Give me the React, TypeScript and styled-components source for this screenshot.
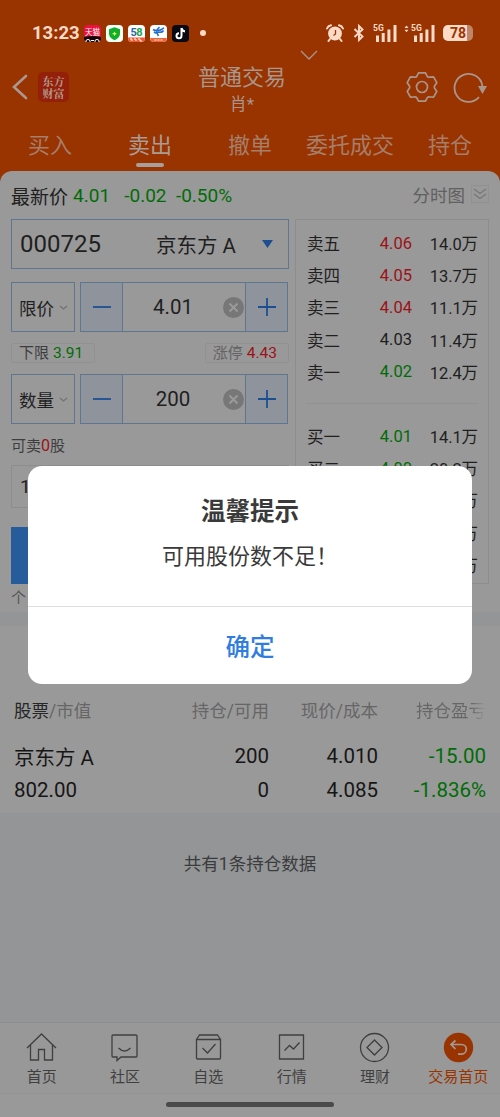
import React from 'react';
import styled, { createGlobalStyle } from 'styled-components';

const Global = createGlobalStyle`
  * { box-sizing: border-box; }
  body { margin: 0; background: #999; }
  body, button { font-family: Roboto, "Noto Sans CJK SC", sans-serif; }
  svg { display: block; flex: none; }
`;

const ink = '#1f1f1f';
const green = '#006c06';
const red = '#9c1218';
const blue = '#1c4f92';
const line = '#5f7690';
const faint = '#8c8d8e';

const Screen = styled.div`
  position: relative;
  width: 500px;
  height: 1117px;
  overflow: hidden;
  background: #939597;
  color: ${ink};
  display: flex;
  flex-direction: column;
`;

const Header = styled.header`
  flex: none;
  height: 183px;
  background: #993300;
  color: #a8968d;
`;

const StatusBar = styled.div`
  height: 66px;
  display: flex;
  align-items: center;
  padding: 0 27px 0 32px;
  color: #fbdac8;
`;

const Clock = styled.span`
  font: 700 18.5px/24px Roboto, sans-serif;
  width: 52px;
`;

const AppBadges = styled.div`
  display: flex;
  gap: 5px;
`;

const Dot = styled.i`
  width: 6px;
  height: 6px;
  border-radius: 50%;
  background: #fbdac8;
  margin-left: 11px;
`;

const Signals = styled.div`
  display: flex;
  align-items: center;
  margin-left: auto;
`;

const Battery = styled.span`
  width: 30px;
  height: 16px;
  margin-left: 8px;
  border-radius: 5px;
  background: linear-gradient(90deg, #fbdac8 24px, #c08468 24px);
  color: #993300;
  font: 700 14px/17px Roboto, sans-serif;
  text-align: center;
`;

const NavBar = styled.div`
  height: 56px;
  display: grid;
  grid-template-columns: 38px 32px 1fr 46px 54px;
  align-items: center;
  padding-top: 0;
`;

const Brand = styled.div`
  width: 31px;
  height: 30px;
  margin-top: -14px;
  border-radius: 5px;
  background: #942009;
  color: #b39a8e;
  font: 700 11px/12px "Noto Serif CJK SC", "Noto Sans CJK SC", sans-serif;
  text-align: center;
  padding-top: 3px;
`;

const NavIcon = styled.div<{ $left: number }>`
  margin-top: -14px;
  padding-left: ${p => p.$left}px;
`;

const Account = styled.div`
  display: flex;
  justify-content: center;
  gap: 14px;
  padding-left: 46px;
  margin-top: -8px;
`;

const AccountName = styled.div`
  font-size: 22px;
  line-height: 28px;
  text-align: center;
  small { display: block; font-size: 17px; line-height: 24px; }
`;

const Tabs = styled.nav`
  display: grid;
  grid-template-columns: repeat(5, 1fr);
`;

const Tab = styled.a<{ $on?: boolean }>`
  height: 48px;
  padding-top: 8px;
  font-size: 22px;
  line-height: 32px;
  text-align: center;
  white-space: nowrap;
  color: ${p => (p.$on ? '#aa9c95' : '#a67e6a')};
  &::after {
    content: '';
    display: ${p => (p.$on ? 'block' : 'none')};
    width: 28px;
    height: 4px;
    border-radius: 2px;
    background: #a5a09e;
    margin: 1px auto 0;
  }
`;

const TradePanel = styled.section`
  flex: none;
  height: 441px;
  margin-top: -12px;
  border-radius: 12px 12px 0 0;
  background: #999;
  padding: 0 11px;
`;

const QuoteLine = styled.div`
  height: 48px;
  display: flex;
  align-items: center;
  font-size: 19px;
  white-space: pre;
  color: ${green};
  b { font-weight: 400; color: ${ink}; margin-right: 5px; }
`;

const ChartToggle = styled.span`
  display: flex;
  align-items: center;
  gap: 6px;
  margin-left: auto;
  font-size: 17.5px;
  color: #606060;
  margin-top: -2px;
`;

const ToggleBox = styled.span`
  width: 18px;
  height: 18px;
  border: 1px solid #919191;
  display: grid;
  place-items: center;
`;

const Columns = styled.div`
  display: grid;
  grid-template-columns: 278px 194px;
  gap: 6px;
`;

const StockField = styled.div`
  height: 50px;
  border: 1px solid ${line};
  display: flex;
  align-items: center;
  padding: 0 15px 0 8px;
  font-size: 24px;
  span { margin-left: auto; font-size: 20.5px; margin-right: 26px; }
`;

const FieldRow = styled.div<{ $top: number }>`
  display: grid;
  grid-template-columns: 64px 208px;
  gap: 5px;
  height: 50px;
  margin-top: ${p => p.$top}px;
`;

const Picker = styled.div`
  border: 1px solid ${line};
  display: flex;
  align-items: center;
  gap: 5px;
  padding-left: 7px;
  font-size: 17.5px;
`;

const Stepper = styled.div`
  border: 1px solid ${line};
  display: grid;
  grid-template-columns: 42px 1fr 42px;
`;

const StepButton = styled.div`
  display: grid;
  place-items: center;
  background: #8f949c;
  &:first-child { border-right: 1px solid ${line}; }
  &:last-child { border-left: 1px solid ${line}; }
`;

const StepValue = styled.div`
  display: grid;
  grid-template-columns: 100px 21px;
  align-items: center;
  text-align: center;
  font-size: 20.5px;
`;

const Limits = styled.div`
  display: flex;
  justify-content: space-between;
  margin-top: 11px;
`;

const Limit = styled.div<{ $tone: string; $muted?: boolean }>`
  height: 20px;
  border: 1px solid #909192;
  border-radius: 2px;
  padding: 0 ${p => (p.$muted ? 11 : 11)}px 0 7px;
  font-size: 15px;
  line-height: 19px;
  color: ${p => (p.$muted ? '#636363' : '#3c3c3c')};
  b { font-weight: 400; font-size: 15.5px; color: ${p => p.$tone}; margin-left: 4px; }
`;

const Sellable = styled.div`
  margin-top: 10px;
  height: 24px;
  font-size: 15px;
  line-height: 24px;
  color: #3e3e3e;
  b { font-weight: 400; font-size: 16px; color: ${red}; }
`;

const Presets = styled.div`
  height: 43px;
  margin-top: 7px;
  border: 1px solid ${faint};
  padding-left: 8px;
  font-size: 19px;
  line-height: 42px;
`;

const SellButton = styled.div`
  height: 57px;
  margin-top: 19px;
  background: #265c9c;
`;

const Note = styled.div`
  font-size: 15px;
  line-height: 28px;
  color: #555;
`;

const Book = styled.div`
  height: 365px;
  border: 1px solid ${faint};
  padding: 7px 10px;
`;

const BookRow = styled.div`
  height: 32.2px;
  display: grid;
  grid-template-columns: 50px 55px 1fr;
  align-items: center;
  font-size: 16.5px;
  white-space: nowrap;
  padding-left: 1px;
`;

const Price = styled.span<{ $tone: string }>`
  color: ${p => p.$tone};
  text-align: right;
`;

const Volume = styled.span`
  text-align: right;
  letter-spacing: -0.1px;
`;

const BookSplit = styled.div`
  height: 32px;
  display: grid;
  align-items: center;
  &::before { content: ''; height: 1px; background: #909192; }
`;

const Holdings = styled.section`
  flex: none;
  height: 187px;
  margin-top: 14px;
  padding-top: 64px;
  background: #999;
`;

const HoldRow = styled.div<{ $head?: boolean }>`
  height: 34px;
  margin-bottom: ${p => (p.$head ? 14 : 0)}px;
  margin-top: ${p => (p.$head ? 3 : 0)}px;
  height: ${p => (p.$head ? 32 : 34)}px;
  display: grid;
  grid-template-columns: 150px 105px 109px 108px;
  padding-left: 14px;
  align-items: center;
  font-size: ${p => (p.$head ? 17.5 : 20.5)}px;
  color: ${p => (p.$head ? '#666' : '#161616')};
  text-align: right;
  white-space: nowrap;
  > :first-child { text-align: left; }
  b { font-weight: 400; color: #262626; }
  em { font-style: normal; color: ${green}; }
`;

const FadeText = styled.span`
  background: linear-gradient(90deg, #666 78%, #999 100%);
  background-clip: text;
  -webkit-background-clip: text;
  color: transparent;
`;

const Summary = styled.p`
  margin: 37px 0 0;
  font-size: 17.5px;
  line-height: 28px;
  text-align: center;
  color: #3b3c3d;
`;

const BottomBar = styled.nav`
  flex: none;
  margin-top: auto;
  height: 72px;
  border-top: 1px solid #8e8e8e;
  border-bottom: 1px solid #939393;
  background: #989898;
  display: grid;
  grid-template-columns: repeat(6, 1fr);
`;

const BottomItem = styled.a<{ $on?: boolean }>`
  display: flex;
  flex-direction: column;
  align-items: center;
  padding-top: 9px;
  font-size: 15px;
  line-height: 24px;
  white-space: nowrap;
  color: ${p => (p.$on ? '#993300' : '#3f3f3f')};
  svg { margin-bottom: 2px; }
`;

const GestureArea = styled.div`
  flex: none;
  height: 23px;
  background: #999;
  padding-top: 8px;
  &::before {
    content: '';
    display: block;
    width: 168px;
    height: 5px;
    margin: 0 auto;
    border-radius: 3px;
    background: #4a4a4a;
  }
`;

const Dialog = styled.div`
  position: absolute;
  left: 28px;
  top: 466px;
  width: 444px;
  height: 218px;
  border-radius: 14px;
  background: #fff;
  text-align: center;
  color: #3a3a3a;
  display: flex;
  flex-direction: column;
`;

const DialogTitle = styled.h2`
  margin: 28px 0 0;
  font-size: 24.5px;
  line-height: 36px;
  font-weight: 700;
`;

const DialogText = styled.p`
  margin: 10px 0 0;
  font-size: 22px;
  line-height: 34px;
`;

const Confirm = styled.button`
  margin-top: auto;
  height: 78px;
  padding: 0 0 0;
  border: 0;
  border-top: 1px solid #dde0e0;
  background: none;
  color: #2f7de0;
  font-size: 24.5px;
  font-weight: 500;
`;

const stroke = { fill: 'none', stroke: 'currentColor', strokeWidth: 1.3 } as const;

const TmallBadge = () => (
  <svg width="17" height="17" viewBox="0 0 17 17">
    <rect width="17" height="17" rx="4" fill="#e9123f" />
    <path d="M0 12q8.500-2 17 0v1a4 4 0 0 1-4 4H4a4 4 0 0 1-4-4z" fill="#130609" />
    <text x="8.500" y="9.500" fontSize="7.500" fill="#fff" textAnchor="middle" fontFamily="Noto Sans CJK SC">天猫</text>
    <path d="M2 17v-1a2 1.500 0 0 1 4 0v1M11 17v-1a2 1.500 0 0 1 4 0v1M7 15.500h3" fill="none" stroke="#fff" strokeWidth="1" />
  </svg>
);
const ShieldBadge = () => (
  <svg width="17" height="17" viewBox="0 0 17 17">
    <rect width="17" height="17" rx="4" fill="#f6fff7" />
    <path d="M8.500 2.300 14 4.200v4.600c0 3-2.200 5-5.500 6.400C5.200 13.800 3 11.800 3 8.800V4.200z" fill="#10ae2c" />
    <path d="m8.500 6.500.8 1.600 1.700.7-1.700.7-.8 1.600-.8-1.600L6 8.800l1.700-.7z" fill="#d9ff61" />
  </svg>
);
const CityBadge = () => (
  <svg width="17" height="17" viewBox="0 0 17 17">
    <rect width="17" height="17" rx="4" fill="#fff" />
    <path d="M0 12.500h17v.5a4 4 0 0 1-4 4H4a4 4 0 0 1-4-4z" fill="#f1592f" />
    <text x="2.500" y="10.800" fontSize="11" fontWeight="700" fill="#2865b4" fontFamily="Roboto">5</text>
    <text x="8.300" y="10.800" fontSize="11" fontWeight="700" fill="#21a44b" fontFamily="Roboto">8</text>
    <path d="M2 14h2v2M6 14h2v2M10 14h2v2h2" stroke="#fff" fill="none" />
  </svg>
);
const TelecomBadge = () => (
  <svg width="17" height="17" viewBox="0 0 17 17">
    <rect width="17" height="17" rx="4" fill="#fff" />
    <path d="M.2 13h16.600a4 4 0 0 1-3.800 4H4a4 4 0 0 1-3.800-4z" fill="#ef6336" />
    <path d="M3 4.500c3 2 7 1.500 11-1.700M9.500 2C6 5 6 7 8.500 11M13.500 5.500C12 8 10 7.500 8 7M4 7c2 1.500 3 1 4 0" fill="none" stroke="#236ed0" strokeWidth="1.600" />
    <path d="M4.500 15h8" stroke="#fff" strokeDasharray="2 1" />
  </svg>
);
const TikTokBadge = () => (
  <svg width="17" height="17" viewBox="0 0 17 17">
    <rect width="17" height="17" rx="4" fill="#090911" />
    <path d="M9.500 3v7.700a2.500 2.500 0 1 1-2.500-2.500M9.500 3c.3 2 1.500 3.200 3.500 3.400" fill="none" stroke="#fff" strokeWidth="2" />
  </svg>
);

const AlarmIcon = () => (
  <svg width="18" height="18" viewBox="0 0 18 18">
    <circle cx="9" cy="9.500" r="6.900" fill="#fbdac8" />
    <path d="m4 15-1.500 2M14 15l1.500 2M1 4.500Q2 2 5 1.300M17 4.500Q16 2 13 1.300" stroke="#fbdac8" strokeWidth="2" fill="none" strokeLinecap="round" />
    <path d="M9.500 6v4L7.500 11.500" stroke="#993300" strokeWidth="1.300" fill="none" />
  </svg>
);
const BluetoothIcon = () => (
  <svg width="12" height="18" viewBox="0 0 12 18">
    <path d="m1.500 5 8 7.500L6 16V2l3.500 3.500-8 7.500" fill="none" stroke="#fbdac8" strokeWidth="1.900" />
  </svg>
);
const SignalIcon = ({ arrows }: { arrows?: boolean }) => (
  <svg width={arrows ? 31 : 24} height="18" viewBox={arrows ? '-7 0 31 18' : '0 0 24 18'}>
    {arrows && <path d="m-6.500 4 2-2.500 2 2.500zM-6.500 5.800l2 2.500 2-2.500z" fill="#fbdac8" />}
    <text x="0" y="7" fontSize="8.500" fontWeight="700" fill="#fbdac8" fontFamily="Roboto">5G</text>
    <path d="M3 11.500h3V18H3zM8.700 9h3v9h-3zM14.400 5.500h3V18h-3zM20.500 1h3v17h-3z" fill="#fbdac8" />
  </svg>
);
const BackIcon = () => (
  <svg width="16" height="26" viewBox="0 0 16 26">
    <path d="M14 2 2 13l12 11" fill="none" stroke="#aa9890" strokeWidth="2.600" strokeLinecap="round" />
  </svg>
);
const GearIcon = () => (
  <svg width="32" height="32" viewBox="0 0 32 32">
    <path d="M12.500 1.800h7l1.800 3.700q1 .9 2.300.7l4-.3 3.200 5.800-2.300 3.400q-.5 1 0 2l2.300 3.300-3.200 5.800-4-.3q-1.300-.2-2.300.7l-1.800 3.600h-7l-1.800-3.600q-1-.9-2.300-.7l-4 .3-3.200-5.800 2.300-3.300q.5-1 0-2L1.200 11.700l3.200-5.800 4 .3q1.300.2 2.300-.7z" fill="none" stroke="#a8968d" strokeWidth="1.700" strokeLinejoin="round" />
    <circle cx="16" cy="16" r="5.500" fill="none" stroke="#a8968d" strokeWidth="1.700" />
  </svg>
);
const RefreshIcon = () => (
  <svg width="34" height="32" viewBox="0 0 34 32">
    <path d="M26 26.200A14 14 0 1 1 29.400 15" fill="none" stroke="#a8968d" strokeWidth="1.800" />
    <path d="M25 15h9l-4.500 8z" fill="#a8968d" />
  </svg>
);
const Chevron = ({ w, h, color, sw = 1.3 }: { w: number; h: number; color: string; sw?: number }) => (
  <svg width={w} height={h} viewBox={`0 0 ${w} ${h}`}>
    <path d={`M1 1 ${w / 2} ${h - 1} ${w - 1} 1`} fill="none" stroke={color} strokeWidth={sw} />
  </svg>
);
const ClearIcon = () => (
  <svg width="21" height="21" viewBox="0 0 21 21">
    <circle cx="10.500" cy="10.500" r="10.500" fill="#777" />
    <path d="m6.500 6.500 8 8m0-8-8 8" stroke="#9a9a9a" strokeWidth="2" />
  </svg>
);

const MinusIcon = () => (
  <svg width="18" height="18" viewBox="0 0 18 18"><path d="M0 9h18" stroke={blue} strokeWidth="1.800" /></svg>
);
const PlusIcon = () => (
  <svg width="18" height="18" viewBox="0 0 18 18"><path d="M0 9h18M9 0v18" stroke={blue} strokeWidth="1.800" /></svg>
);

const Field = ({ label, value, top }: { label: string; value: string; top: number }) => (
  <FieldRow $top={top}>
    <Picker>{label}<Chevron w={9} h={5} color="#737373" /></Picker>
    <Stepper>
      <StepButton><MinusIcon /></StepButton>
      <StepValue>{value}<ClearIcon /></StepValue>
      <StepButton><PlusIcon /></StepButton>
    </Stepper>
  </FieldRow>
);

const asks = [
  ['卖五', '4.06', '14.0万', red],
  ['卖四', '4.05', '13.7万', red],
  ['卖三', '4.04', '11.1万', red],
  ['卖二', '4.03', '11.4万', ink],
  ['卖一', '4.02', '12.4万', green],
];
const bids = [
  ['买一', '4.01', '14.1万', green],
  ['买二', '4.00', '20.2万', green],
  ['', '', '万', green],
  ['', '', '万', green],
  ['', '', '万', green],
];
const Quotes = ({ rows }: { rows: string[][] }) => (
  <>
    {rows.map(([name, price, volume, tone], i) => (
      <BookRow key={i}><span>{name}</span><Price $tone={tone}>{price}</Price><Volume>{volume}</Volume></BookRow>
    ))}
  </>
);

const bottomItems: [string, React.ReactNode][] = [
  ['首页', <path key="i" {...stroke} d="M1 16 15.500 2 30 16M4.500 13v15h8V17.500h6V28h8V13" />],
  ['社区', <path key="i" {...stroke} d="M4 3h23a1 1 0 0 1 1 1v20a1 1 0 0 1-1 1H12l-4 3.500V25H4a1 1 0 0 1-1-1V4a1 1 0 0 1 1-1zM9.500 16q6 6 12 0" />],
  ['自选', <path key="i" {...stroke} d="M3.500 7.500h24V26a1 1 0 0 1-1 1h-22a1 1 0 0 1-1-1zL6.500 3h18l3 4.500M9.500 16l5 5 8-9" />],
  ['行情', <path key="i" {...stroke} d="M3.500 3h24v24h-24zM8.500 18.500l5-5 4 3.500 6-6.500" />],
  ['理财', <g key="i" {...stroke}><circle cx="15.500" cy="15.500" r="14" /><path d="m15.500 8 7.500 7.500-7.500 7.500L8 15.500z" /></g>],
  ['交易首页', <g key="i"><circle cx="15.500" cy="15.500" r="14.700" fill="#993300" /><path d="m12.500 8.500-4.500 4 4.500 4.500M8 12.500h10.500a4.800 4.800 0 0 1 0 9.600H15" fill="none" stroke="#a49a95" strokeWidth="1.700" /></g>],
];

export default function App() {
  return (
    <Screen>
      <Global />
      <Header>
        <StatusBar>
          <Clock>13:23</Clock>
          <AppBadges><TmallBadge /><ShieldBadge /><CityBadge /><TelecomBadge /><TikTokBadge /></AppBadges>
          <Dot />
          <Signals>
            <AlarmIcon />
            <span style={{ width: 9 }} />
            <BluetoothIcon />
            <span style={{ width: 8 }} />
            <SignalIcon />
            <span style={{ width: 7 }} />
            <SignalIcon arrows />
            <Battery>78</Battery>
          </Signals>
        </StatusBar>
        <NavBar>
          <NavIcon $left={12}><BackIcon /></NavIcon>
          <Brand>东方<br />财富</Brand>
          <Account>
            <AccountName>普通交易<small>肖*</small></AccountName>
            <NavIcon $left={0}><Chevron w={18} h={10} color="#a8968d" /></NavIcon>
          </Account>
          <NavIcon $left={6}><GearIcon /></NavIcon>
          <NavIcon $left={7}><RefreshIcon /></NavIcon>
        </NavBar>
        <Tabs>
          {['买入', '卖出', '撤单', '委托成交', '持仓'].map(t => <Tab key={t} $on={t === '卖出'}>{t}</Tab>)}
        </Tabs>
      </Header>

      <TradePanel>
        <QuoteLine>
          <b>最新价</b>4.01   -0.02  -0.50%
          <ChartToggle>分时图
            <ToggleBox>
              <svg width="14" height="14" viewBox="0 0 14 14"><path d="m1 2 6 4.500L13 2M1 7l6 4.500L13 7" fill="none" stroke="#777" strokeWidth="1.200" /></svg>
            </ToggleBox>
          </ChartToggle>
        </QuoteLine>
        <Columns>
          <div>
            <StockField>
              000725<span>京东方 A</span>
              <svg width="11" height="8" viewBox="0 0 11 8"><path d="M0 0h11L5.500 8z" fill={blue} /></svg>
            </StockField>
            <Field label="限价" value="4.01" top={13} />
            <Limits>
              <Limit $tone={green}>下限<b>3.91</b></Limit>
              <Limit $tone={red} $muted>涨停<b>4.43</b></Limit>
            </Limits>
            <Field label="数量" value="200" top={11} />
            <Sellable>可卖<b>0</b>股</Sellable>
            <Presets>1</Presets>
            <SellButton />
            <Note>个</Note>
          </div>
          <Book>
            <Quotes rows={asks} />
            <BookSplit />
            <Quotes rows={bids} />
          </Book>
        </Columns>
      </TradePanel>

      <Holdings>
        <HoldRow $head>
          <span><b>股票</b>/市值</span><span>持仓/可用</span><span>现价/成本</span><span><FadeText>持仓盈亏</FadeText></span>
        </HoldRow>
        <HoldRow><span>京东方 A</span><span>200</span><span>4.010</span><em>-15.00</em></HoldRow>
        <HoldRow><span>802.00</span><span>0</span><span>4.085</span><em>-1.836%</em></HoldRow>
      </Holdings>
      <Summary>共有1条持仓数据</Summary>

      <BottomBar>
        {bottomItems.map(([label, icon]) => (
          <BottomItem key={label} $on={label === '交易首页'}>
            <svg width="31" height="31" viewBox="0 0 31 31">{icon}</svg>
            {label}
          </BottomItem>
        ))}
      </BottomBar>
      <GestureArea />

      <Dialog role="dialog">
        <DialogTitle>温馨提示</DialogTitle>
        <DialogText>可用股份数不足！</DialogText>
        <Confirm>确定</Confirm>
      </Dialog>
    </Screen>
  );
}
